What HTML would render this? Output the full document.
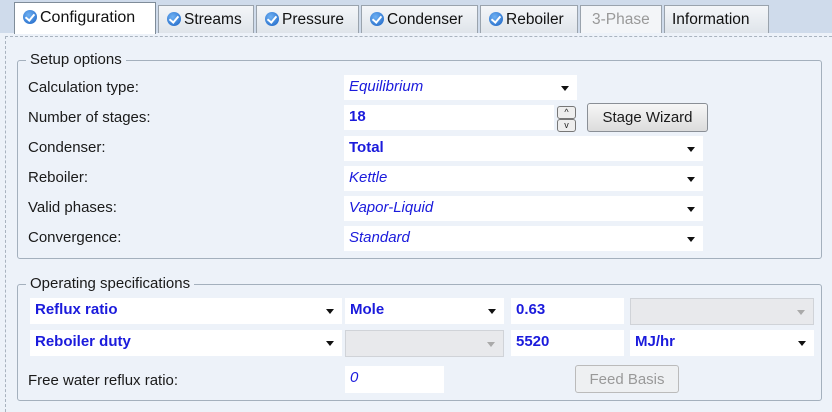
<!DOCTYPE html><html><head><style>
*{box-sizing:border-box;margin:0;padding:0}
body{width:832px;height:412px;background:#edf2f9;font-family:"Liberation Sans",sans-serif;font-size:15px;color:#1a1a1a;position:relative;overflow:hidden}
.bar{position:absolute;left:0;top:0;width:832px;height:33px;background:#cfdbeb}
.tab{position:absolute;top:5px;height:28px;background:linear-gradient(#f4f6f9,#dfe4ea);border:1px solid #9aa3ad;border-bottom:none;padding:5px 0 0 8px;font-size:15.5px;color:#111;white-space:nowrap}
.tab.act{top:2px;height:32px;background:#fff;border-color:#7f8c99;padding-top:6px;font-size:16px}
.tab.dis{color:#999;background:#f3f5f8}
.chk{display:inline-block;width:14px;height:14px;border-radius:50%;background:radial-gradient(circle at 40% 35%,#6fb1f3,#1a62c4);vertical-align:-2px;margin-right:3px;position:relative}
.chk:after{content:"";position:absolute;left:4px;top:2px;width:4px;height:7px;border:solid #fff;border-width:0 2px 2px 0;transform:rotate(40deg)}
.content{position:absolute;left:5px;top:36px;width:827px;height:376px;border:1px dashed #a9b3bf;border-right:none;border-bottom:none}
.grp{position:absolute;left:17px;width:805px;border:1px solid #a4b0bd;border-radius:3px}
.gt{position:absolute;left:8px;top:-10px;background:#edf2f9;padding:0 4px;font-size:15px}
.lbl{position:absolute;left:28px;font-size:15px}
.f{position:absolute;background:#fff;color:#1b1bdc;font-size:15px;padding:3px 5px;height:25px;white-space:nowrap}
.i{font-style:italic}.b{font-weight:bold}
.dd:after{content:"";position:absolute;right:8px;top:11px;border:4px solid transparent;border-top:5px solid #111;border-bottom:none}
.dis2{background:#e8e9ec;border:1px solid #d0d3d8}
.dis2:after{border-top-color:#aaa}
.btn{position:absolute;border:1px solid #8a8f96;border-radius:3px;background:linear-gradient(#f7f7f7,#dcdcdc);font-size:15px;text-align:center;padding-top:5px}
</style></head><body>
<div class="bar"></div>
<div class="content"></div>
<div class="tab act" style="left:14px;width:142px"><span class="chk"></span>Configuration</div>
<div class="tab" style="left:158px;width:96px"><span class="chk"></span>Streams</div>
<div class="tab" style="left:256px;width:103px"><span class="chk"></span>Pressure</div>
<div class="tab" style="left:361px;width:117px"><span class="chk"></span>Condenser</div>
<div class="tab" style="left:480px;width:98px"><span class="chk"></span>Reboiler</div>
<div class="tab dis" style="left:580px;width:82px;padding-left:11px">3-Phase</div>
<div class="tab" style="left:664px;width:105px;padding-left:7px">Information</div>

<div class="grp" style="top:60px;height:199px"><span class="gt">Setup options</span></div>
<div class="lbl" style="top:79px">Calculation type:</div>
<div class="lbl" style="top:109px">Number of stages:</div>
<div class="lbl" style="top:139px">Condenser:</div>
<div class="lbl" style="top:169px">Reboiler:</div>
<div class="lbl" style="top:199px">Valid phases:</div>
<div class="lbl" style="top:229px">Convergence:</div>
<div class="f dd i" style="left:344px;top:75px;width:233px">Equilibrium</div>
<div class="f b" style="left:344px;top:105px;width:210px">18</div>
<div style="position:absolute;left:557px;top:106px;width:19px;height:24px;font-size:9px;line-height:11px;text-align:center;color:#222"><div style="border:1px solid #777;border-radius:3px;background:#eee">&#94;</div><div style="border:1px solid #777;border-radius:3px;background:#eee">v</div></div>
<div class="btn" style="left:587px;top:103px;width:121px;height:29px">Stage Wizard</div>
<div class="f dd b" style="left:344px;top:136px;width:359px">Total</div>
<div class="f dd i" style="left:344px;top:166px;width:359px">Kettle</div>
<div class="f dd i" style="left:344px;top:196px;width:359px">Vapor-Liquid</div>
<div class="f dd i" style="left:344px;top:226px;width:359px">Standard</div>

<div class="grp" style="top:284px;height:117px"><span class="gt">Operating specifications</span></div>
<div class="f dd b" style="left:30px;top:298px;width:312px;height:26px">Reflux ratio</div>
<div class="f dd b" style="left:345px;top:298px;width:159px;height:26px">Mole</div>
<div class="f b" style="left:511px;top:298px;width:113px;height:26px">0.63</div>
<div class="f dd dis2" style="left:630px;top:298px;width:184px;height:27px"></div>
<div class="f dd b" style="left:30px;top:330px;width:312px;height:26px">Reboiler duty</div>
<div class="f dd dis2" style="left:345px;top:330px;width:159px;height:27px"></div>
<div class="f b" style="left:511px;top:330px;width:113px;height:26px">5520</div>
<div class="f dd b" style="left:630px;top:330px;width:184px;height:26px">MJ/hr</div>
<div class="lbl" style="top:372px">Free water reflux ratio:</div>
<div class="f i" style="left:345px;top:366px;width:99px;height:27px">0</div>
<div class="btn" style="left:575px;top:365px;width:104px;height:28px;color:#999;border-color:#bbb;background:#eef0f2">Feed Basis</div>
</body></html>
